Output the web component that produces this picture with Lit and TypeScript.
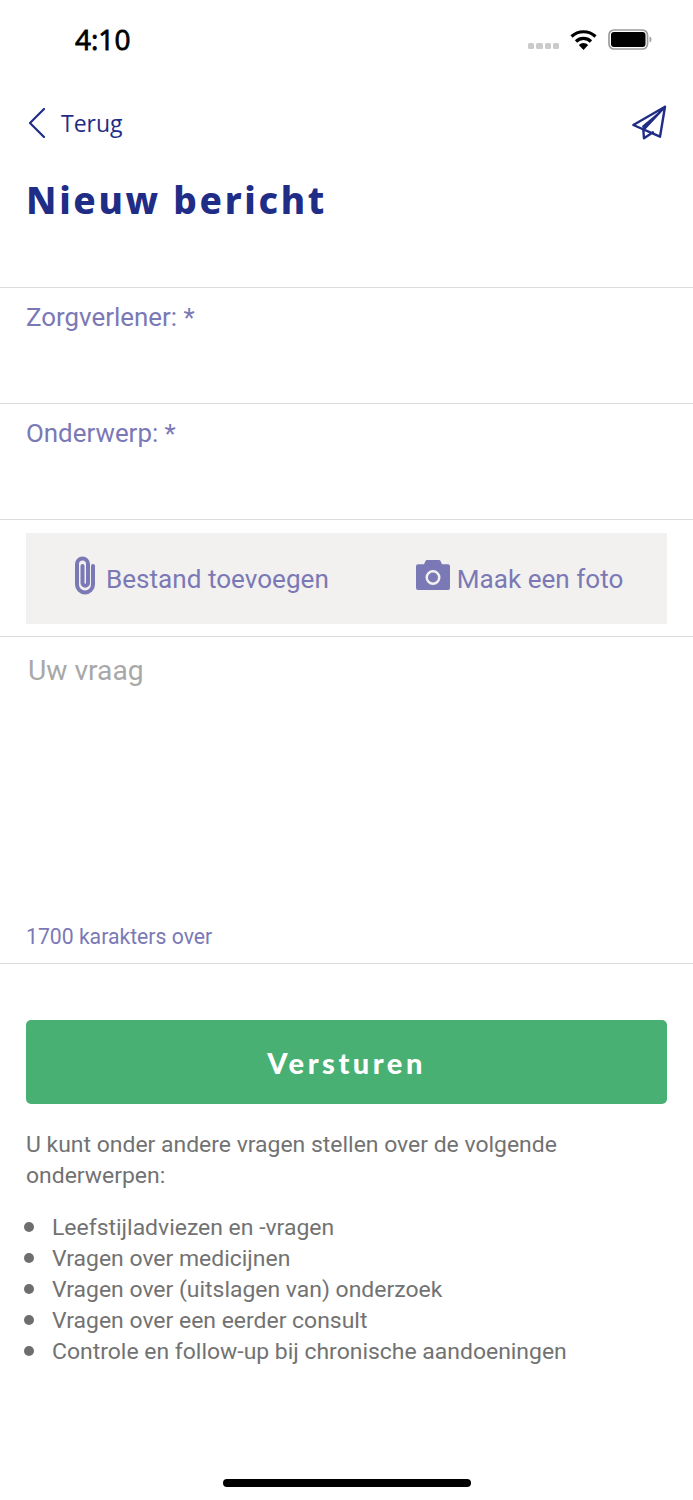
import { LitElement, html, css } from "lit";
import { customElement } from "lit/decorators.js";

const topics = [
  "Leefstijladviezen en -vragen",
  "Vragen over medicijnen",
  "Vragen over (uitslagen van) onderzoek",
  "Vragen over een eerder consult",
  "Controle en follow-up bij chronische aandoeningen",
];

@customElement("app-root")
export class AppRoot extends LitElement {
  static styles = css`
    :host {
      display: block;
      width: 693px;
      height: 1500px;
      background: #fff;
      font-family: Roboto, sans-serif;
      position: relative;
      overflow: hidden;
    }
    .status {
      height: 78px;
      box-sizing: border-box;
      padding: 22px 41px 0 75px;
      display: flex;
      justify-content: space-between;
    }
    .time {
      font-family: "Open Sans", sans-serif;
      font-weight: 500;
      font-size: 28px;
      line-height: 35px;
      color: #000;
      -webkit-text-stroke: 0.8px #000;
    }
    .status-icons {
      display: flex;
      align-items: flex-start;
      gap: 11px;
      padding-top: 7px;
    }
    .dots {
      display: flex;
      gap: 2px;
      margin-top: 14px;
    }
    .dots i {
      width: 6.25px;
      height: 6px;
      border-radius: 1.5px;
      background: #cbcbcb;
    }
    .wifi {
      margin-top: 1px;
    }
    .nav {
      height: 90px;
      box-sizing: border-box;
      padding: 27px 26px 0 29px;
      display: flex;
      justify-content: space-between;
      align-items: flex-start;
      color: #1f2d87;
    }
    .back {
      display: flex;
      align-items: center;
      gap: 16px;
      font-family: "Open Sans", sans-serif;
      font-size: 23px;
      line-height: 36px;
    }
    h1 {
      margin: 0;
      padding: 9px 0 0 26px;
      height: 119px;
      box-sizing: border-box;
      font-family: "Noto Sans", sans-serif;
      font-weight: 800;
      font-size: 37px;
      line-height: 46px;
      letter-spacing: 2.7px;
      color: #1f2d87;
    }
    .field {
      height: 116px;
      box-sizing: border-box;
      border-top: 1px solid #dcdcdc;
      padding: 12px 26px 0;
      font-size: 25.9px;
      line-height: 35px;
      color: #7b79b5;
    }
    .attach-row {
      height: 117px;
      box-sizing: border-box;
      border-top: 1px solid #dcdcdc;
      padding: 13px 26px 0;
    }
    .attach {
      height: 91px;
      background: #f2f1f0;
      display: flex;
      align-items: center;
      color: #7b79b5;
      font-size: 26.1px;
    }
    .attach span {
      display: flex;
      align-items: center;
    }
    .file {
      margin-left: 48px;
      gap: 10px;
    }
    .file svg {
      margin-bottom: 6px;
    }
    .photo {
      margin-left: 87px;
      gap: 7px;
    }
    .photo svg {
      margin-bottom: 8px;
    }
    .question {
      height: 328px;
      box-sizing: border-box;
      border-top: 1px solid #dcdcdc;
      border-bottom: 1px solid #dcdcdc;
      padding: 16px 26px 0;
      display: flex;
      flex-direction: column;
      justify-content: space-between;
    }
    .placeholder {
      padding-left: 2px;
      font-size: 28.2px;
      line-height: 36px;
      color: #a8a8a8;
    }
    .count {
      font-size: 21.2px;
      line-height: 26px;
      margin-bottom: 13px;
      color: #7b79b5;
    }
    .send {
      display: block;
      box-sizing: border-box;
      width: 641px;
      height: 84px;
      margin: 56px 26px 0;
      border: 0;
      border-radius: 5px;
      background: #49b073;
      color: #fff;
      font-family: Lato, sans-serif;
      font-weight: 900;
      font-size: 29px;
      letter-spacing: 3.5px;
    }
    .intro {
      margin: 25px 26px 0;
      font-size: 22.95px;
      line-height: 31px;
      color: #727272;
    }
    ul {
      list-style: none;
      margin: 21px 26px 0 24px;
      padding: 0;
      font-size: 22.95px;
      line-height: 31px;
      color: #727272;
    }
    li {
      display: flex;
      align-items: center;
      gap: 18px;
    }
    li::before {
      content: "";
      width: 10px;
      height: 10px;
      border-radius: 50%;
      background: #6e6e6e;
      margin-top: -1px;
    }
    .home {
      position: absolute;
      left: 223px;
      top: 1479px;
      width: 248px;
      height: 8px;
      border-radius: 4px;
      background: #000;
    }
  `;

  render() {
    return html`
      <div class="status">
        <div class="time">4:10</div>
        <div class="status-icons">
          <div class="dots"><i></i><i></i><i></i><i></i></div>
          <svg class="wifi" width="27" height="20" viewBox="0 0 27 20">
            <path d="M13.500 20l-4.700-5a6.600 6.600 0 0 1 9.400 0z" fill="#000" />
            <path d="M6 11.500a10.800 10.800 0 0 1 15 0M1.500 6.500a17.500 17.500 0 0 1 24 0" fill="none" stroke="#000" stroke-width="3.200" />
          </svg>
          <svg width="44" height="21" viewBox="0 0 44 21">
            <rect x="1" y="1" width="38.500" height="19" rx="5" fill="none" stroke="#9c9c9c" stroke-width="1.700" />
            <rect x="3" y="3" width="34.500" height="15" rx="3" fill="#000" />
            <path d="M41.500 7.500c1.500 .4 2 1.500 2 3s-.5 2.600-2 3z" fill="#a3a3a3" />
          </svg>
        </div>
      </div>
      <div class="nav">
        <div class="back">
          <svg width="16" height="30" viewBox="0 0 16 30">
            <path d="M15 1L1 15l14 14" fill="none" stroke="#1f2d87" stroke-width="2.200" stroke-linecap="round" stroke-linejoin="round" />
          </svg>
          Terug
        </div>
        <svg width="36" height="36" viewBox="0 0 36 36">
          <path d="M34 1.700L2.300 20l26.700 11.700zM34 1.700L12.300 25l.7 8.300 9-6" fill="none" stroke="#1f2d87" stroke-width="2.400" stroke-linejoin="round" stroke-linecap="round" />
          <path d="M34 1.700L11 21l1.300 4z" fill="#1f2d87" />
        </svg>
      </div>
      <h1>Nieuw bericht</h1>
      <div class="field">Zorgverlener: *</div>
      <div class="field">Onderwerp: *</div>
      <div class="attach-row">
        <div class="attach">
          <span class="file">
            <svg width="22" height="39" viewBox="0 0 22 39">
              <path d="M19 10V28.500A8 8 0 0 1 3 28.500V8A5.500 5.500 0 0 1 14 8V27A2.750 2.750 0 0 1 8.500 27V10" fill="none" stroke="#7b79b5" stroke-width="4" stroke-linecap="round" />
            </svg>
            Bestand toevoegen
          </span>
          <span class="photo">
            <svg width="34" height="30" viewBox="0 0 34 30">
              <path fill-rule="evenodd" fill="#7b79b5" d="M2 4.300h6l1.500-3.300c.3-.6 .8-1 1.500-1h12c.7 0 1.200 .4 1.500 1l1.500 3.300h6a2 2 0 0 1 2 2V28a2 2 0 0 1-2 2H2a2 2 0 0 1-2-2V6.300a2 2 0 0 1 2-2zM17 10a7.500 7.500 0 1 0 0 15 7.500 7.500 0 0 0 0-15zM17 12.500a5 5 0 1 1 0 10 5 5 0 0 1 0-10z" />
            </svg>
            Maak een foto
          </span>
        </div>
      </div>
      <div class="question">
        <div class="placeholder">Uw vraag</div>
        <div class="count">1700 karakters over</div>
      </div>
      <button class="send">Versturen</button>
      <p class="intro">U kunt onder andere vragen stellen over de volgende onderwerpen:</p>
      <ul>
        ${topics.map((t) => html`<li>${t}</li>`)}
      </ul>
      <div class="home"></div>
    `;
  }
}
